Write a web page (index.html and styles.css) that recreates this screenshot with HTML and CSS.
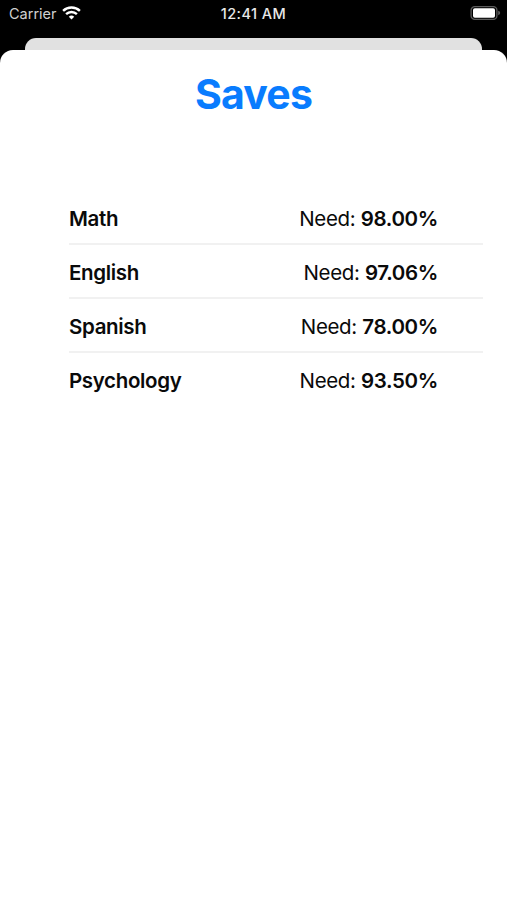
FILE: index.html
```
<!DOCTYPE html>
<html lang="en">
<head>
    <meta charset="UTF-8">
    <meta name="viewport" content="width=device-width, initial-scale=1.0">
    <title>Saves</title>
    <link rel="stylesheet" href="styles.css">
</head>
<body>
    <header class="status-bar">
        <div class="carrier">
            <span class="carrier-name">Carrier</span>
            <svg class="wifi" width="19" height="14" viewBox="0 0 19 14" fill="none" stroke="#fff" stroke-width="2.4">
                <path d="M1.1 4.9a12 12 0 0 1 16.8 0"/>
                <path d="M4.1 8.2a7.7 7.7 0 0 1 10.8 0"/>
                <path d="M9.5 13.6l-2.7-2.8a3.8 3.8 0 0 1 5.4 0z" fill="#fff" stroke="none"/>
            </svg>
        </div>
        <span class="time">12:41 AM</span>
        <svg class="battery" width="31" height="14" viewBox="0 0 31 14">
            <rect x="1.1" y="0.7" width="25.8" height="12.6" rx="3.6" fill="none" stroke="#5c5c5c" stroke-width="1.3"/>
            <rect x="3" y="2.2" width="22" height="9.6" rx="1.8" fill="#fff"/>
            <path d="M28.2 4.8q2 .6 2 2.2t-2 2.2z" fill="#5c5c5c"/>
        </svg>
    </header>
    <div class="back-card"></div>
    <main class="sheet">
        <h1>Saves</h1>
        <ul class="saves">
            <li class="save"><b class="subject">Math</b><span class="need">Need: <b>98.00%</b></span></li>
            <li class="save"><b class="subject">English</b><span class="need">Need: <b>97.06%</b></span></li>
            <li class="save"><b class="subject">Spanish</b><span class="need">Need: <b>78.00%</b></span></li>
            <li class="save"><b class="subject">Psychology</b><span class="need">Need: <b>93.50%</b></span></li>
        </ul>
    </main>
</body>
</html>
```
FILE: styles.css
```
* {
    box-sizing: border-box;
}
body {
    display: flex;
    flex-direction: column;
    height: 900px;
    margin: 0;
    background-color: #000;
    color: #0a0a0a;
    font-family: Inter, "Liberation Sans", sans-serif;
    overflow: hidden;
}
.status-bar {
    display: grid;
    grid-template-columns: 1fr auto 1fr;
    align-items: center;
    height: 27px;
    margin-bottom: 11px;
    padding: 0 6px 0 9px;
    color: #e8e8e8;
    font-size: 14.5px;
}
.carrier {
    display: flex;
    align-items: center;
    gap: 5px;
}
.carrier-name {
    color: #d0d0d0;
}
.wifi {
    margin-top: -2px;
}
.time {
    margin-right: 3px;
    font-weight: 500;
    letter-spacing: 0.45px;
}
.battery {
    justify-self: end;
    margin-top: -1px;
}
.back-card {
    flex: none;
    height: 12px;
    margin: 0 25px;
    border-radius: 11px 11px 0 0;
    background-color: #e1e1e1;
}
.sheet {
    flex: 1;
    border-radius: 13px 13px 0 0;
    background-color: #fff;
}
h1 {
    margin: 19px 0 72px;
    color: #097cfe;
    font-size: 41px;
    font-weight: 700;
    line-height: 50px;
    letter-spacing: -0.8px;
    text-align: center;
}
.saves {
    margin: 0 24px 0 69px;
    padding: 0;
    list-style: none;
}
.save {
    display: flex;
    align-items: center;
    justify-content: space-between;
    height: 54px;
    padding: 2px 45px 0 0;
    border-bottom: 2px solid #f1f1f1;
    font-size: 20.5px;
    letter-spacing: -0.35px;
}
.save:last-child {
    border-bottom-color: transparent;
}
.save b {
    font-weight: 600;
}
```
